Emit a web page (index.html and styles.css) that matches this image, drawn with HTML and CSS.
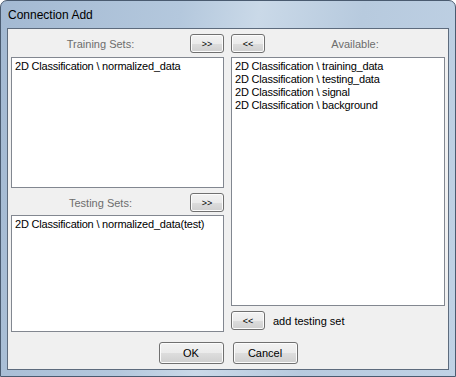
FILE: index.html
```html
<!DOCTYPE html>
<html>
<head>
<meta charset="utf-8">
<link rel="stylesheet" href="styles.css">
</head>
<body>
<div class="window">
  <div class="titlebar"><span class="title">Connection Add</span></div>
  <div class="client">
    <div class="main">
      <div class="col left">
        <div class="header">
          <span class="label">Training Sets:</span>
          <button class="btn small">&gt;&gt;</button>
        </div>
        <div class="list train">
          <div class="item">2D Classification \ normalized_data</div>
        </div>
        <div class="header second">
          <span class="label">Testing Sets:</span>
          <button class="btn small">&gt;&gt;</button>
        </div>
        <div class="list test">
          <div class="item">2D Classification \ normalized_data(test)</div>
        </div>
      </div>
      <div class="col right">
        <div class="header">
          <button class="btn small">&lt;&lt;</button>
          <span class="label">Available:</span>
        </div>
        <div class="list avail">
          <div class="item">2D Classification \ training_data</div>
          <div class="item">2D Classification \ testing_data</div>
          <div class="item">2D Classification \ signal</div>
          <div class="item">2D Classification \ background</div>
        </div>
        <div class="addrow">
          <button class="btn small">&lt;&lt;</button>
          <span class="addlabel">add testing set</span>
        </div>
      </div>
    </div>
    <div class="footer">
      <button class="btn wide">OK</button>
      <button class="btn wide">Cancel</button>
    </div>
  </div>
</div>
</body>
</html>
```

FILE: styles.css
```css
html, body {
  margin: 0;
  padding: 0;
  background: #ffffff;
}
.window {
  width: 456px;
  height: 377px;
  box-sizing: border-box;
  padding: 0 6px 6px 6px;
  border-radius: 7px 7px 0 0;
  border: 1px solid #4a5b70;
  background: linear-gradient(100deg, #a3b9d2 0%, #b4c8dd 35%, #cad9e8 50%, #b7cade 70%, #c0d2e5 100%);
  font-family: "Liberation Sans", Arial, sans-serif;
  display: flex;
  flex-direction: column;
}
.titlebar {
  height: 27px;
  display: flex;
  align-items: center;
  padding-left: 1px;
}
.title {
  font-size: 12px;
  color: #000;
}
.client {
  flex: 1;
  box-sizing: border-box;
  background: #f0f0f0;
  border: 1px solid #5d6b7d;
  padding: 5px 3px 5px 3px;
  display: flex;
  flex-direction: column;
}
.main {
  display: flex;
  gap: 7px;
  height: 298px;
}
.col {
  display: flex;
  flex-direction: column;
}
.left { width: 213px; }
.right { width: 214px; }
.header {
  height: 19px;
  display: flex;
  align-items: center;
}
.header.second { margin-top: 5px; }
.label {
  flex: 1;
  text-align: center;
  font-size: 11px;
  color: #6d6d6d;
}
.list {
  box-sizing: border-box;
  background: #fff;
  border: 1px solid #828790;
  padding: 2px 3px;
  margin-top: 4px;
}
.train { height: 131px; }
.test { height: 117px; margin-top: 3px; }
.avail { height: 249px; }
.item {
  font-size: 11px;
  line-height: 13px;
  letter-spacing: -0.2px;
  color: #000;
  white-space: nowrap;
}
.btn {
  box-sizing: border-box;
  border: 1px solid #707070;
  border-radius: 3px;
  background: linear-gradient(to bottom, #f2f2f2 0%, #ebebeb 50%, #dddddd 51%, #cfcfcf 100%);
  font-family: "Liberation Sans", Arial, sans-serif;
  color: #000;
  padding: 0;
  margin: 0;
  box-shadow: inset 0 0 0 1px #fcfcfc;
}
.small {
  width: 34px;
  height: 19px;
  font-size: 9px;
}
.addrow {
  margin-top: 5px;
  height: 19px;
  display: flex;
  align-items: center;
  gap: 8px;
}
.addlabel {
  font-size: 11px;
  color: #000;
}
.footer {
  margin-top: 10px;
  display: flex;
  justify-content: center;
  gap: 9px;
}
.wide {
  width: 65px;
  height: 22px;
  font-size: 11px;
}
```
